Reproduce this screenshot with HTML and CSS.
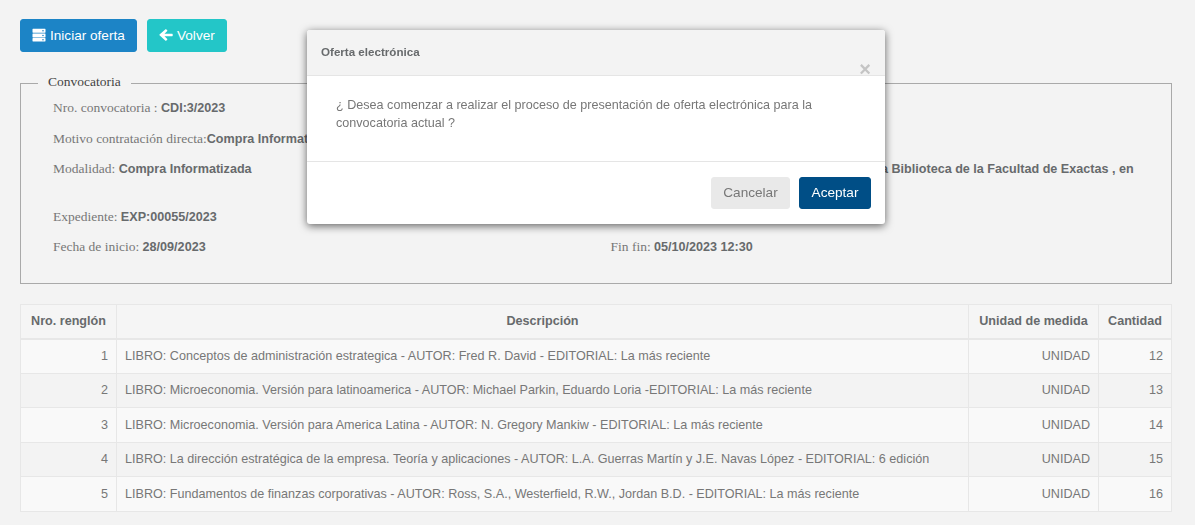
FILE: index.html
```html
<!DOCTYPE html>
<html lang="es">
<head>
<meta charset="utf-8">
<title>Oferta electrónica</title>
<link rel="stylesheet" href="styles.css">
</head>
<body>
<main class="page">
  <div class="actions">
    <button class="btn btn-primary">
      <svg class="icon" viewBox="0 0 14 14" width="14" height="14" aria-hidden="true"><path fill="#fff" fill-rule="evenodd" d="M1 .8h12c.3 0 .5.2.5.5v2.900c0 .3-.2.5-.5.5H1c-.3 0-.5-.2-.5-.5V1.300c0-.3.2-.5.5-.5zM11 2a.8.8 0 1 0 0 1.600A.8.8 0 0 0 11 2zM1 5.500h12c.3 0 .5.2.5.5v2.900c0 .3-.2.5-.5.5H1c-.3 0-.5-.2-.5-.5V6c0-.3.2-.5.5-.5zM11 6.700a.8.8 0 1 0 0 1.600.8.8 0 0 0 0-1.600zM1 10.100h12c.3 0 .5.2.5.5v2.400c0 .3-.2.5-.5.5H1c-.3 0-.5-.2-.5-.5v-2.400c0-.3.2-.5.5-.5zM11 11a.8.8 0 1 0 0 1.600.8.8 0 0 0 0-1.600z"/></svg>
      Iniciar oferta
    </button>
    <button class="btn btn-info">
      <svg class="icon" viewBox="0 0 14 14" width="14" height="14" aria-hidden="true"><path fill="#fff" d="M7.200 1.300l1.100 1.100c.2.200.2.500 0 .700L5.500 5.700h7.700c.3 0 .5.2.5.5v1.600c0 .3-.2.5-.5.500H5.500l2.800 2.600c.2.2.2.5 0 .7l-1.100 1.100c-.2.200-.5.200-.7 0L.5 7.300c-.2-.2-.2-.5 0-.7l6-5.300c.2-.2.500-.2.700 0z"/></svg>
      Volver
    </button>
  </div>

  <fieldset class="call">
    <legend>Convocatoria</legend>
    <div class="call-grid">
      <p>Nro. convocatoria : <b>CDI:3/2023</b></p>
      <p></p>
      <p>Motivo contratación directa:<b>Compra Informatizada</b></p>
      <p></p>
      <p>Modalidad: <b>Compra Informatizada</b></p>
      <p>Objeto : <b>Adquisición de libros técnicos, para la Biblioteca de la Facultad de Exactas , en<br>Tandil</b></p>
      <p>Expediente: <b>EXP:00055/2023</b></p>
      <p></p>
      <p>Fecha de inicio: <b>28/09/2023</b></p>
      <p>Fin fin: <b>05/10/2023 12:30</b></p>
    </div>
  </fieldset>

  <table class="items">
    <thead>
      <tr><th class="c-num">Nro. renglón</th><th class="c-desc">Descripción</th><th class="c-unit">Unidad de medida</th><th class="c-qty">Cantidad</th></tr>
    </thead>
    <tbody>
      <tr><td class="r">1</td><td>LIBRO: Conceptos de administración estrategica - AUTOR: Fred R. David - EDITORIAL: La más reciente</td><td class="r">UNIDAD</td><td class="r">12</td></tr>
      <tr><td class="r">2</td><td>LIBRO: Microeconomia. Versión para latinoamerica - AUTOR: Michael Parkin, Eduardo Loria -EDITORIAL: La más reciente</td><td class="r">UNIDAD</td><td class="r">13</td></tr>
      <tr><td class="r">3</td><td>LIBRO: Microeconomia. Versión para America Latina - AUTOR: N. Gregory Mankiw - EDITORIAL: La más reciente</td><td class="r">UNIDAD</td><td class="r">14</td></tr>
      <tr><td class="r">4</td><td>LIBRO: La dirección estratégica de la empresa. Teoría y aplicaciones - AUTOR: L.A. Guerras Martín y J.E. Navas López - EDITORIAL: 6 edición</td><td class="r">UNIDAD</td><td class="r">15</td></tr>
      <tr><td class="r">5</td><td>LIBRO: Fundamentos de finanzas corporativas - AUTOR: Ross, S.A., Westerfield, R.W., Jordan B.D. - EDITORIAL: La más reciente</td><td class="r">UNIDAD</td><td class="r">16</td></tr>
    </tbody>
  </table>
</main>

<div class="modal" role="dialog">
  <header class="modal-head">
    <h4>Oferta electrónica</h4>
    <span class="close">×</span>
  </header>
  <div class="modal-body">¿ Desea comenzar a realizar el proceso de presentación de oferta electrónica para la convocatoria actual ?</div>
  <footer class="modal-foot">
    <button class="btn btn-light">Cancelar</button>
    <button class="btn btn-dark">Aceptar</button>
  </footer>
</div>
</body>
</html>
```

FILE: styles.css
```css
* { box-sizing: border-box; }
html, body { height: 100%; }
body {
  margin: 0;
  background: #f3f3f3;
  color: #676a6c;
  font: 12.600px/18px "Liberation Sans", Arial, sans-serif;
  overflow: hidden;
}
.page { padding: 19px 23px 0 20px; }
.actions { display: flex; gap: 10px; height: 33px; }
.btn {
  font: 13.600px/18px "Liberation Sans", Arial, sans-serif;
  border: 1px solid transparent;
  border-radius: 3px;
  color: #fff;
  cursor: pointer;
  white-space: nowrap;
}
.btn-primary { background: #1c84c6; border-color: #1c84c6; width: 117px; padding: 0; }
.btn-info { background: #23c6c8; border-color: #23c6c8; width: 80px; padding: 0; }
.btn-light { background: #e9e9e9; border-color: #e9e9e9; color: #777; width: 79px; height: 32px; padding: 0; }
.btn-dark { background: #004e86; border-color: #004e86; width: 72px; height: 32px; padding: 0; }
.icon { vertical-align: -2px; }

.call {
  margin: 22px 0 0;
  padding: 0;
  height: 210px;
  border: 1px solid #a9a9a9;
  min-width: 0;
}
.call legend {
  font: 13.500px/16px "Liberation Serif", "Times New Roman", serif;
  color: #444;
  padding: 0 10px 2px;
  margin-left: 17px;
}
.call-grid {
  display: grid;
  grid-template-columns: 557.500px 1fr;
  grid-template-rows: 31px 30px 48px 30px 30px;
  padding: 7.400px 0 0 32px;
}
.call-grid p {
  margin: 0;
  font: 13.500px/18px "Liberation Serif", "Times New Roman", serif;
  color: #777;
}
.call-grid b {
  font: bold 12.600px/18px "Liberation Sans", Arial, sans-serif;
  color: #676a6c;
}

.items {
  width: 1152px;
  margin-top: 19.500px;
  border-collapse: collapse;
  table-layout: fixed;
}
.items th, .items td {
  border: 1px solid #e7e7e7;
  padding: 0 8px;
  height: 34.500px;
  vertical-align: middle;
  white-space: nowrap;
  color: #777;
}
.items th { background: #f5f5f5; font-weight: bold; text-align: center; height: 34.500px; border-bottom-width: 2px; color: #676a6c; }
.items .c-num { width: 96px; }
.items .c-unit { width: 130px; }
.items .c-qty { width: 73px; }
.items tbody tr:nth-child(odd) { background: #f9f9f9; }
.items tbody tr:nth-child(even) { background: #f3f3f3; }
.items .r { text-align: right; }

.modal {
  position: fixed;
  left: 307px;
  top: 30px;
  width: 578px;
  height: 194px;
  background: #fff;
  border-radius: 3px;
  box-shadow: 0 2px 8px rgba(0, 0, 0, .6);
  display: flex;
  flex-direction: column;
}
.modal-head {
  position: relative;
  height: 46px;
  background: #f3f3f3;
  border-bottom: 1px solid #e5e5e5;
  border-radius: 3px 3px 0 0;
  padding: 13px 14px;
}
.modal-head h4 { margin: 0; font: bold 11.600px/18px "Liberation Sans", Arial, sans-serif; color: #676a6c; }
.close {
  position: absolute;
  right: 14px;
  top: 29px;
  font: bold 20px/20px "Liberation Sans", Arial, sans-serif;
  color: #c4c4c4;
}
.modal-body {
  height: 87px;
  padding: 20px 29px;
  border-bottom: 1px solid #e5e5e5;
  line-height: 18px;
  color: #777;
}
.modal-foot {
  display: flex;
  justify-content: flex-end;
  gap: 9px;
  padding: 15px 14px;
}
```
